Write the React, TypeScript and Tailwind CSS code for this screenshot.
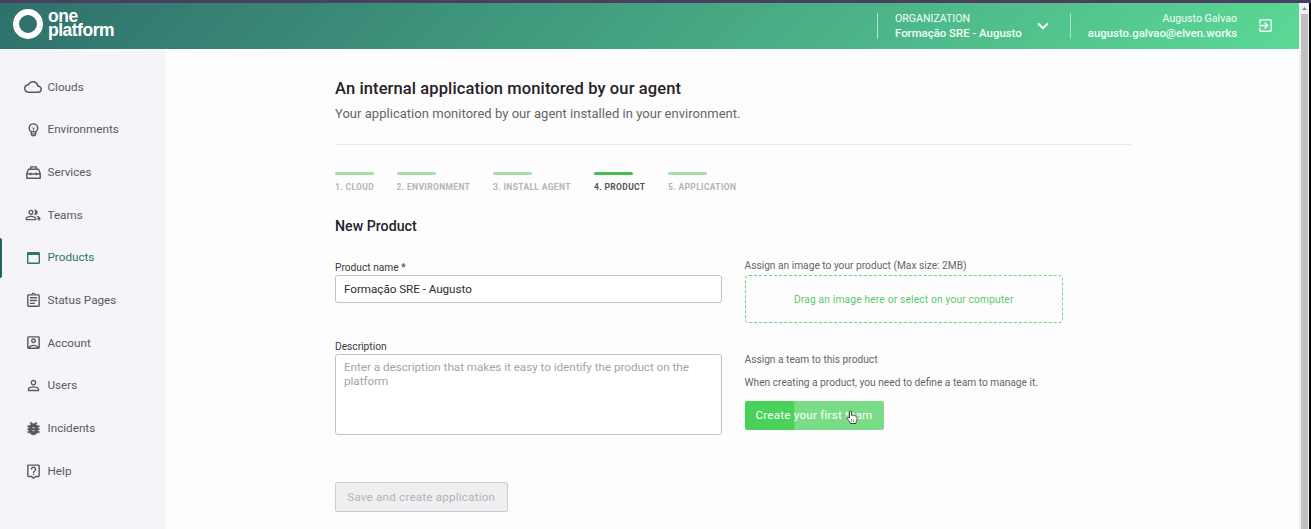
import type { ReactNode } from "react";
import {
  MdOutlineCloud,
  MdOutlineEmojiObjects,
  MdOutlinePeopleAlt,
  MdOutlineAssignment,
  MdOutlineAccountBox,
  MdPersonOutline,
  MdOutlineLiveHelp,
  MdExitToApp,
} from "react-icons/md";

function ToolboxIcon() {
  return (
    <svg viewBox="0 0 24 24" className="size-[17px]" fill="none" stroke="currentColor" strokeWidth="2" strokeLinejoin="round">
      <path d="M8 7.500V4h8v3.500M2.500 13.500L5 7.500h14l2.500 6V20h-19zM2.500 14h19M8 12v4M16 12v4" />
    </svg>
  );
}

function WindowIcon() {
  return (
    <svg viewBox="0 0 13 12" className="h-3 w-[13px]">
      <path d="M0 1.200Q0 0 1.200 0h10.600Q13 0 13 1.200v9.600Q13 12 11.800 12H1.200Q0 12 0 10.800zM1.400 3v7.600h10.200V3z" fill="currentColor" fillRule="evenodd" />
    </svg>
  );
}

function BugIcon() {
  return (
    <svg viewBox="0 0 24 24" className="size-[17px]" fill="currentColor" stroke="currentColor" strokeWidth="0.9">
      <path d="M20 8h-2.810c-.45-.78-1.070-1.450-1.820-1.960L17 4.410 15.590 3l-2.170 2.170C12.960 5.060 12.490 5 12 5c-.49 0-.96.06-1.410.17L8.410 3 7 4.410l1.620 1.630C7.880 6.550 7.260 7.220 6.810 8H4v2h2.090c-.05.33-.09.66-.09 1v1H4v2h2v1c0 .34.04.67.09 1H4v2h2.810c1.040 1.790 2.970 3 5.190 3s4.150-1.210 5.190-3H20v-2h-2.090c.05-.33.09-.66.09-1v-1h2v-2h-2v-1c0-.34-.04-.67-.09-1H20V8zm-6 8h-4v-2h4v2zm0-4h-4v-2h4v2z" />
    </svg>
  );
}

function ChevronIcon() {
  return (
    <svg viewBox="0 0 20 20" className="mt-[3px] ml-[9px] size-5" fill="none" stroke="currentColor" strokeWidth="2">
      <path d="M5.200 7.500L10 12.300l4.800-4.800" />
    </svg>
  );
}

const NAV: { label: string; icon: ReactNode; active?: boolean }[] = [
  { label: "Clouds", icon: <MdOutlineCloud className="size-[18px]" /> },
  { label: "Environments", icon: <MdOutlineEmojiObjects className="size-[17px]" /> },
  { label: "Services", icon: <ToolboxIcon /> },
  { label: "Teams", icon: <MdOutlinePeopleAlt className="size-4" /> },
  { label: "Products", icon: <WindowIcon />, active: true },
  { label: "Status Pages", icon: <MdOutlineAssignment className="size-[17px]" /> },
  { label: "Account", icon: <MdOutlineAccountBox className="size-[17px]" /> },
  { label: "Users", icon: <MdPersonOutline className="size-[17px]" /> },
  { label: "Incidents", icon: <BugIcon /> },
  { label: "Help", icon: <MdOutlineLiveHelp className="size-[17px]" /> },
];

const STEPS = [
  { label: "1. CLOUD", width: "w-[61.5px]" },
  { label: "2. ENVIRONMENT", width: "w-[96.5px]" },
  { label: "3. INSTALL AGENT", width: "w-[101px]" },
  { label: "4. PRODUCT", width: "w-[74px]", active: true },
  { label: "5. APPLICATION", width: "w-[80px]" },
];

function Header() {
  return (
    <header className="flex h-[45.5px] w-[1299px] shrink-0 bg-linear-135 from-[#2f706c] to-[#5cd995] text-[#f2fff9]">
      <div className="flex pt-[6px] pl-[13px]">
        <div className="size-[30px] rounded-full border-[6px] border-white" />
        <div className="pl-[5px] font-['Liberation_Sans',sans-serif] text-[17.5px] leading-[14px] font-bold tracking-[-0.5px] text-white">
          <div>one</div>
          <div>platform</div>
        </div>
      </div>
      <div className="ml-auto flex pt-[10px]">
        <div className="h-[26px] w-px bg-white/60" />
        <div className="-mt-px w-[146px] pl-[17px] text-[10.6px] leading-[14px] whitespace-nowrap">
          <div>ORGANIZATION</div>
          <div className="text-[11.4px] font-medium">Formação SRE - Augusto</div>
        </div>
        <ChevronIcon />
        <div className="ml-[17px] h-[26px] w-px bg-white/50" />
        <div className="-mt-px w-[166px] text-right text-[10.6px] leading-[14px] whitespace-nowrap">
          <div>Augusto Galvao</div>
          <div className="text-[11.4px] font-medium">augusto.galvao@elven.works</div>
        </div>
        <MdExitToApp className="mt-[4px] mr-[25px] ml-5 size-[17px]" />
      </div>
    </header>
  );
}

function Sidebar() {
  return (
    <nav className="w-[166px] shrink-0 bg-[#f5f4f8] pt-[17px]">
      {NAV.map((item) => (
        <div
          key={item.label}
          className={
            item.active
              ? "flex h-[42.7px] items-center text-[#2f756c]"
              : "flex h-[42.7px] items-center text-[#5b595c]"
          }
        >
          <div className={item.active ? "h-10 w-0.5 rounded-r bg-[#216360]" : "w-0.5"} />
          <div className="ml-[22px] flex w-[18px] justify-center">{item.icon}</div>
          <span className="ml-[5.5px] pt-px text-[11.7px]">{item.label}</span>
        </div>
      ))}
    </nav>
  );
}

function Scrollbar() {
  return (
    <div className="flex w-3 shrink-0 border-r-2 border-black bg-[#f1f1f3]">
      <div className="flex w-full flex-col items-center">
        <svg viewBox="0 0 5 3" className="my-1 h-[3px] w-[5px]" fill="#8a888c">
          <path d="M0 3L2.5 0L5 3z" />
        </svg>
        <div className="w-[7px] flex-1 bg-[#c1bfc4]" />
      </div>
    </div>
  );
}

function HandCursor() {
  return (
    <svg viewBox="0 0 12 14" className="absolute top-[9px] left-[101px] h-[14px] w-3">
      <path
        d="M3.5 8V2a1 1 0 0 1 2 0v3.5c.3-.7 1.7-.6 2 .3.4-.6 1.6-.4 1.8.4.6-.3 1.7 0 1.7 1V10c0 1.500-1 1.500-1 3.500H4.500C4 11.500 1.500 9.500.8 8c-.3-.8.8-1.200 1.400-.6z"
        fill="white"
        stroke="#333"
        strokeWidth="0.9"
      />
      <path d="M5.500 9v3M7.500 9v3" stroke="#555" strokeWidth="0.6" />
    </svg>
  );
}

function LeftColumn() {
  return (
    <div className="w-[387px]">
      <div className="text-[10.2px] leading-[14px] text-[#3c383e]">Product name *</div>
      <div className="flex h-7 items-center rounded-[3px] border border-[#c3c1c5] bg-white pt-[2px] pl-2 text-[11.7px] tracking-[-0.05px] text-[#302c32]">
        Formação SRE - Augusto
      </div>
      <div className="mt-[37px] text-[10.2px] leading-[14px] text-[#3c383e]">Description</div>
      <div className="h-[81px] rounded-[3px] border border-[#c3c1c5] bg-white px-2 pt-[6px] text-[11.7px] leading-[13.5px] tracking-[-0.03px] text-[#a5a3a7]">
        Enter a description that makes it easy to identify the product on the platform
      </div>
      <div className="mt-[47px] flex h-[30px] w-[172.5px] items-center justify-center rounded-[2px] border border-[#cfcdd0] bg-[#f0eef1] pt-px text-[11.7px] tracking-[0.18px] text-[#b5b2b7]">
        Save and create application
      </div>
    </div>
  );
}

function RightColumn() {
  return (
    <div className="ml-[22.5px] w-[318.5px] text-[10.2px] leading-[14px] text-[#686369]">
      <div className="-mt-[2px]">Assign an image to your product (Max size: 2MB)</div>
      <div className="mt-[2px] flex h-12 items-center justify-center rounded-[4px] border border-dashed border-[#70d47b] pt-px tracking-[0.18px] text-[#5bc969]">
        Drag an image here or select on your computer
      </div>
      <div className="mt-[30px]">Assign a team to this product</div>
      <div className="mt-[9px]">When creating a product, you need to define a team to manage it.</div>
      <div className="relative mt-[11px] flex h-[29px] w-[139px] items-center justify-center rounded-[2px] bg-linear-to-r from-[#49d159] from-35% to-[#7bdc87] to-36% pb-[2px] text-[11.7px] tracking-[0.2px] text-white">
        Create your first team
        <HandCursor />
      </div>
    </div>
  );
}

export default function App() {
  return (
    <div className="flex h-[529px] w-[1311px] flex-col overflow-hidden bg-[#fefdfe] font-[Roboto,sans-serif]">
      <div className="h-[3px] shrink-0 bg-[#4a3f5e]" />
      <div className="flex min-h-0 flex-1">
        <div className="flex w-[1299px] flex-col">
          <Header />
          <div className="flex min-h-0 flex-1">
            <Sidebar />
            <main className="ml-[169px] w-[797px] pt-[30.5px]">
              <h1 className="text-[16.5px] leading-[20px] font-medium tracking-[0.11px] text-[#262128]">
                An internal application monitored by our agent
              </h1>
              <p className="mt-[7px] text-[13px] leading-[16px] tracking-[0.03px] text-[#686369]">
                Your application monitored by our agent installed in your environment.
              </p>
              <div className="mt-[22px] h-px bg-[#ebebeb]" />
              <div className="mt-[27px] flex">
                {STEPS.map((step) => (
                  <div key={step.label} className={`${step.width} shrink-0`}>
                    <div
                      className={
                        step.active
                          ? "h-[3px] w-[39px] rounded bg-[#42bf50]"
                          : "h-[3px] w-[39px] rounded bg-[#a5dfaa]"
                      }
                    />
                    <div
                      className={
                        step.active
                          ? "mt-[6px] text-[8.5px] leading-[12px] font-bold tracking-[0.34px] whitespace-nowrap text-[#58545a]"
                          : "mt-[6px] text-[8.5px] leading-[12px] font-bold tracking-[0.34px] whitespace-nowrap text-[#b5b3b6]"
                      }
                    >
                      {step.label}
                    </div>
                  </div>
                ))}
              </div>
              <h2 className="mt-[23px] text-[14.2px] leading-[20px] font-medium text-[#262128]">New Product</h2>
              <div className="mt-[25px] flex">
                <LeftColumn />
                <RightColumn />
              </div>
            </main>
          </div>
        </div>
        <Scrollbar />
      </div>
    </div>
  );
}
